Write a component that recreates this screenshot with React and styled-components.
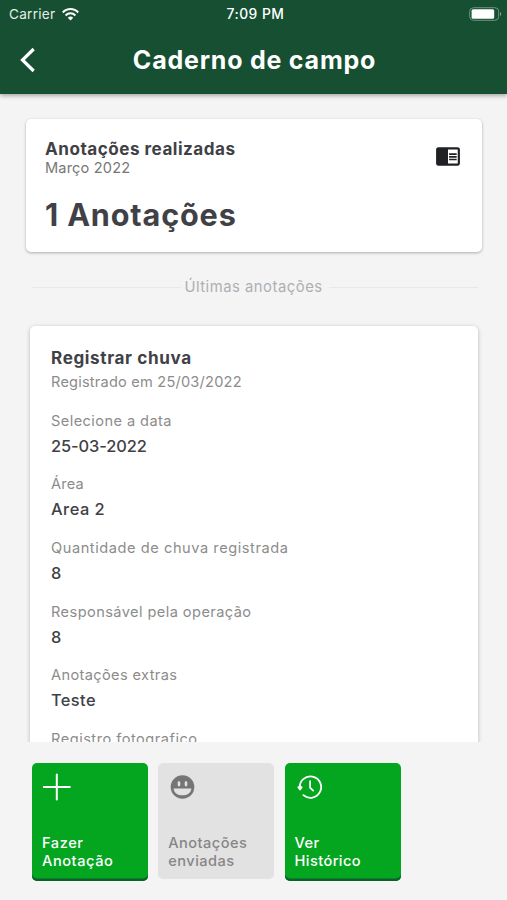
import React from 'react';
import styled, { createGlobalStyle } from 'styled-components';
import { MdChromeReaderMode } from 'react-icons/md';

const GlobalStyle = createGlobalStyle`
  * {
    box-sizing: border-box;
  }

  body {
    margin: 0;
    background-color: #f4f4f4;
    font-family: Inter, 'Open Sans', sans-serif;
  }
`;

const Screen = styled.div`
  display: flex;
  flex-direction: column;
  height: 900px;
  overflow: hidden;
  background-color: #f4f4f4;
`;

const Text = styled.div`
  margin: 0;
  font-size: ${props => props.$size}px;
  line-height: ${props => props.$line}px;
  font-weight: ${props => props.$weight || 400};
  letter-spacing: ${props => props.$track || 0}px;
  color: ${props => props.$color || '#8c8c8c'};
  white-space: nowrap;
`;

const Header = styled.header`
  flex: none;
  height: 94px;
  background-color: #174f32;
  box-shadow: 0 2px 4px rgba(0, 0, 0, 0.3);
`;

const StatusBar = styled.div`
  display: grid;
  grid-template-columns: 1fr auto 1fr;
  align-items: center;
  height: 28px;
  padding: 0 5px 0 9px;
`;

const Signal = styled.div`
  display: flex;
  align-items: center;
  gap: 7px;
`;

const BatteryIcon = styled.svg`
  justify-self: end;
`;

const TitleBar = styled.div`
  display: grid;
  grid-template-columns: 61px 1fr 59px;
  align-items: center;
  height: 64px;
  text-align: center;
`;

const BackButton = styled.button`
  display: flex;
  padding: 0 0 0 19px;
  border: none;
  background: none;
`;

const Summary = styled.section`
  display: flex;
  flex: none;
  justify-content: space-between;
  height: 133px;
  margin: 25px 25px 0 26px;
  padding: 20px 21px 0 19px;
  border-radius: 5px;
  background-color: #fff;
  box-shadow: 0 1px 3px rgba(0, 0, 0, 0.3);

  > svg {
    margin-top: 4px;
  }
`;

const Total = styled(Text)`
  margin-top: 17px;
`;

const Divider = styled.div`
  display: flex;
  flex: none;
  align-items: center;
  gap: 15px;
  height: 24px;
  margin: 23px 29px 0 32px;

  &::before,
  &::after {
    content: '';
    flex: 1;
    height: 1px;
    background-color: #e8e8e8;
  }

  &::before {
    margin-right: -12px;
  }

  &::after {
    margin-left: -9px;
  }
`;

const Notes = styled.main`
  flex: none;
  height: 424px;
  margin-top: 19px;
  padding: 8px 29px 0 30px;
  overflow: hidden;
`;

const Note = styled.article`
  height: 480px;
  padding: 20px 21px;
  border-radius: 5px;
  background-color: #fff;
  box-shadow: 0 1px 4px rgba(0, 0, 0, 0.25);
`;

const Fields = styled.div`
  margin-top: 13.5px;
`;

const Field = styled.div`
  height: 63.7px;
`;

const Actions = styled.footer`
  display: flex;
  gap: 10.3px;
  margin: 21px 0 0 32px;
`;

const Action = styled.button`
  display: flex;
  flex-direction: column;
  justify-content: space-between;
  width: 116px;
  height: ${props => (props.$muted ? 116 : 118)}px;
  padding: 10px 10px ${props => (props.$muted ? 9 : 11)}px;
  border: none;
  border-radius: 5px;
  background-color: ${props => (props.$muted ? '#e2e2e2' : '#04a620')};
  box-shadow: ${props => (props.$muted ? 'none' : 'inset 0 -2.5px 0 #0b602c')};
  font-family: inherit;
  text-align: left;
`;

const INK = '#3f4146';

const fields = [
  { label: 'Selecione a data', track: 0.42, value: '25-03-2022', valueTrack: -0.1 },
  { label: 'Área', track: 0.2, value: 'Area 2', valueTrack: 0.5 },
  { label: 'Quantidade de chuva registrada', track: 0.56, value: '8' },
  { label: 'Responsável pela operação', track: 0.42, value: '8' },
  { label: 'Anotações extras', track: 0.36, value: 'Teste', valueTrack: 0.4 },
  { label: 'Registro fotografico', track: 0.5, value: '' },
];

function WifiIcon() {
  return (
    <svg width="17" height="13" viewBox="0 0 17 13" fill="none" stroke="#fff" strokeWidth="2">
      <path d="M.8 4.5C5-.1 12-.1 16.2 4.5M3.6 7.5c2.8-2.9 7-2.9 9.8 0" />
      <path d="M8.5 12.4 5.8 9.7c1.5-1.5 3.9-1.5 5.4 0z" fill="#fff" stroke="none" />
    </svg>
  );
}

function Battery() {
  return (
    <BatteryIcon width="33" height="14" viewBox="0 0 33 14" fill="none">
      <rect x=".7" y=".7" width="29" height="12.6" rx="3.8" stroke="#6f947e" />
      <rect x="2.6" y="2.3" width="22.6" height="9.4" rx="1.5" fill="#fff" />
      <path d="M31 5v4c1.6-.7 1.6-3.3 0-4z" fill="#80a08d" />
    </BatteryIcon>
  );
}

function PlusIcon() {
  return (
    <svg width="29" height="28" viewBox="0 0 29 28" stroke="#fff" strokeWidth="2" strokeLinecap="round">
      <path d="M14.8 1.5v25M1.8 14h26" />
    </svg>
  );
}

function SmileIcon() {
  return (
    <svg width="29" height="28" viewBox="0 0 29 28">
      <circle cx="14.5" cy="14" r="11.8" fill="#757575" />
      <path d="M5.6 15.4h17.8c-.6 9.2-17.2 9.2-17.8 0z" fill="#e2e2e2" />
      <ellipse cx="11" cy="10.8" rx="1.4" ry="2.8" fill="#e2e2e2" />
      <ellipse cx="18" cy="10.8" rx="1.4" ry="2.8" fill="#e2e2e2" />
    </svg>
  );
}

function HistoryIcon() {
  return (
    <svg width="28" height="28" viewBox="0 0 28 28" fill="none" stroke="#fff" strokeWidth="1.8" strokeLinecap="round" strokeLinejoin="round">
      <path d="M4.8 15A10.7 10.7 0 1 1 8.4 22.1" />
      <path d="M15.1 8.2v6.4l3 3" />
      <path d="m3.4 14.2 1.6 2.4 1.6-2.4z" fill="#fff" />
    </svg>
  );
}

export default function App() {
  return (
    <Screen>
      <GlobalStyle />
      <Header>
        <StatusBar>
          <Signal>
            <Text $size={13.6} $line={16} $track={0.25} $color="#e3eee7">Carrier</Text>
            <WifiIcon />
          </Signal>
          <Text $size={13.8} $line={16} $weight={500} $track={0.5} $color="#fff">7:09 PM</Text>
          <Battery />
        </StatusBar>
        <TitleBar>
          <BackButton aria-label="Voltar">
            <svg width="18" height="26" viewBox="0 0 18 26" fill="none" stroke="#fff" strokeWidth="3.2">
              <path d="M14.7 2 3.5 13l11.2 11" />
            </svg>
          </BackButton>
          <Text as="h1" $size={25} $line={28} $weight={700} $track={0.78} $color="#fff">
            Caderno de campo
          </Text>
        </TitleBar>
      </Header>

      <Summary>
        <div>
          <Text $size={17.1} $line={20} $weight={700} $track={0.5} $color={INK}>Anotações realizadas</Text>
          <Text $size={14.6} $line={19} $track={0.15} $color="#777">Março 2022</Text>
          <Total $size={30.6} $line={40} $weight={700} $track={0.85} $color={INK}>1 Anotações</Total>
        </div>
        <MdChromeReaderMode size={26} color="#202124" />
      </Summary>

      <Divider>
        <Text $size={14.8} $line={24} $track={0.52} $color="#adafb2">Últimas anotações</Text>
      </Divider>

      <Notes>
        <Note>
          <Text $size={17.1} $line={24} $weight={700} $track={0.62} $color={INK}>Registrar chuva</Text>
          <Text $size={14.6} $line={25} $track={0.2}>Registrado em 25/03/2022</Text>
          <Fields>
            {fields.map(field => (
              <Field key={field.label}>
                <Text $size={14.6} $line={25} $track={field.track}>{field.label}</Text>
                <Text $size={16.4} $line={25} $weight={500} $track={field.valueTrack} $color={INK}>{field.value}</Text>
              </Field>
            ))}
          </Fields>
        </Note>
      </Notes>

      <Actions>
        <Action>
          <PlusIcon />
          <Text $size={14.6} $line={18} $weight={500} $track={0.55} $color="#fff">Fazer<br />Anotação</Text>
        </Action>
        <Action $muted>
          <SmileIcon />
          <Text $size={14.6} $line={18} $weight={500} $track={0.45} $color="#868686">Anotações<br />enviadas</Text>
        </Action>
        <Action>
          <HistoryIcon />
          <Text $size={14.6} $line={18} $weight={500} $track={0.4} $color="#fff">Ver<br />Histórico</Text>
        </Action>
      </Actions>
    </Screen>
  );
}
